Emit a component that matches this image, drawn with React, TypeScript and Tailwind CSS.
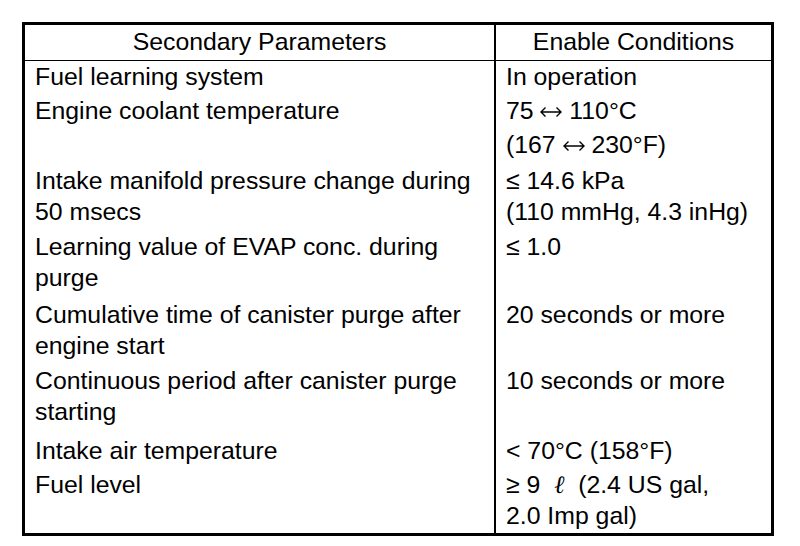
import React from 'react';

// spacing above each row, read off the scan
const rows: { left: string[]; right: React.ReactNode[]; pt: string; gap?: string }[] = [
  { left: ['Fuel learning system'], right: ['In operation'], pt: 'pt-0' },
  {
    left: ['Engine coolant temperature'],
    right: [
      <>75 <Arrow /> 110°C</>,
      <>(167 <Arrow /> 230°F)</>,
    ],
    pt: 'pt-[3px]',
    gap: 'mt-[3px]',
  },
  { left: ['Intake manifold pressure change during', '50 msecs'], right: ['≤ 14.6 kPa', '(110 mmHg, 4.3 inHg)'], pt: 'pt-[5px]' },
  { left: ['Learning value of EVAP conc. during', 'purge'], right: ['≤ 1.0'], pt: 'pt-[4px]' },
  { left: ['Cumulative time of canister purge after', 'engine start'], right: ['20 seconds or more'], pt: 'pt-[6px]' },
  { left: ['Continuous period after canister purge', 'starting'], right: ['10 seconds or more'], pt: 'pt-[4px]' },
  { left: ['Intake air temperature'], right: ['< 70°C (158°F)'], pt: 'pt-[8px]' },
  {
    left: ['Fuel level'],
    right: [
      <>≥ 9  <span className="font-['DejaVu_Serif',serif] italic">ℓ</span>  (2.4 US gal,</>,
      '2.0 Imp gal)',
    ],
    pt: 'pt-[3px] pb-[2px]',
  },
];

// thin double-headed arrow as printed in the manual
function Arrow() {
  return (
    <svg
      width="22"
      height="12"
      viewBox="0 0 22 12"
      className="inline-block align-[1px]"
      fill="none"
      stroke="currentColor"
      strokeWidth="1.4"
    >
      <path d="M1 6H21M5.5 1.5L1 6l4.5 4.5M16.5 1.5L21 6l-4.5 4.5" />
    </svg>
  );
}

const Lines: React.FC<{ lines: React.ReactNode[]; gap?: string }> = ({ lines, gap }) => (
  <>
    {lines.map((l, i) => (
      <div key={i} className={`h-[31px] whitespace-pre ${i > 0 && gap ? gap : ''}`}>
        {l}
      </div>
    ))}
  </>
);

const App: React.FC = () => {
  return (
    <div className="min-h-[546px] bg-white p-[22px] font-['Liberation_Sans',Arial,sans-serif] text-[24.8px] leading-[31px] text-black">
      <div className="w-[752px] border-[3px] border-black">
        <div className="grid grid-cols-[471px_1fr] border-b border-black">
          <div className="border-r-2 border-black pt-[1px] pb-[3px] text-center">Secondary Parameters</div>
          <div className="pt-[1px] pb-[3px] text-center">Enable Conditions</div>
        </div>
        <div className="grid grid-cols-[471px_1fr]">
          {rows.map((r, i) => (
            <React.Fragment key={i}>
              <div className={`border-r-2 border-black pl-[10px] ${r.pt}`}>
                <Lines lines={r.left} />
              </div>
              <div className={`pl-[10px] ${r.pt}`}>
                <Lines lines={r.right} gap={r.gap} />
              </div>
            </React.Fragment>
          ))}
        </div>
      </div>
    </div>
  );
};

export default App;
